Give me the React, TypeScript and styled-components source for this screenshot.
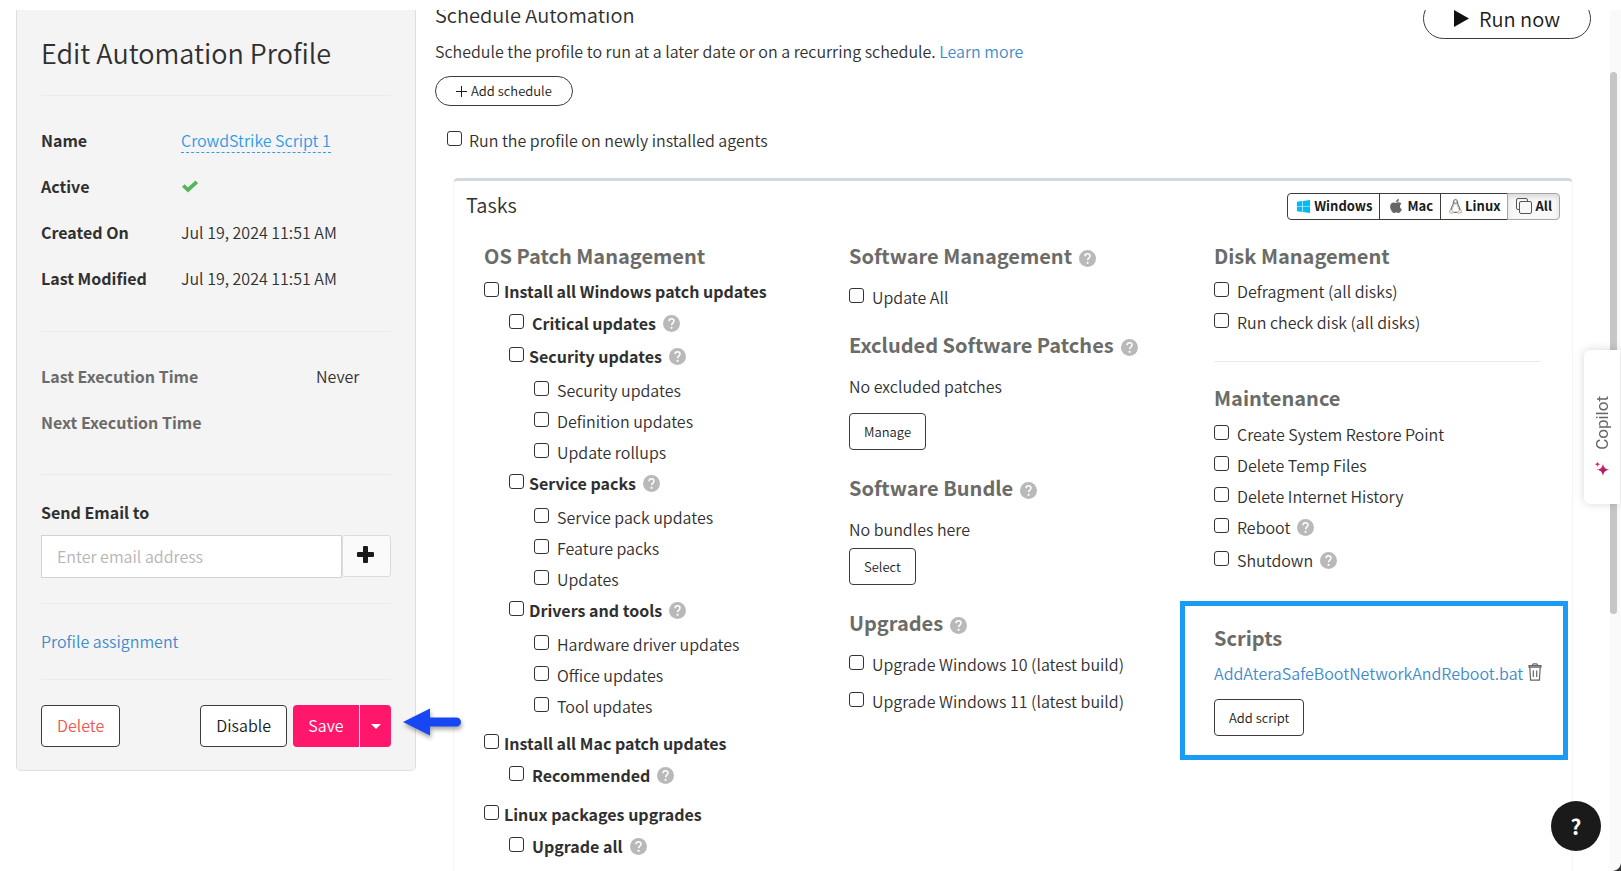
import React, { useId } from "react";
import styled, { createGlobalStyle, css } from "styled-components";
import { FaApple, FaWindows } from "react-icons/fa";

const GlobalStyle = createGlobalStyle`
  *, *::before, *::after { box-sizing: border-box; }
  body {
    margin: 0;
    background: #fff;
    color: #303030;
    font-family: "Noto Sans CJK SC", "Noto Sans", sans-serif;
    font-size: 16px;
    font-weight: 350;
    line-height: 20px;
  }
  button, input { font: inherit; color: inherit; }
  h1, h2, h3, p, ul, dl, dd { margin: 0; padding: 0; }
  ul { list-style: none; }
`;

const Screen = styled.div`
  position: relative;
  height: 100vh;
  padding-top: 10px;
  overflow: hidden;
`;

const Viewport = styled.div`
  display: flex;
  align-items: flex-start;
  height: 100%;
  padding: 0 30px 0 16px;
  overflow: hidden;
`;

/* ---------- Sidebar ---------- */

const Sidebar = styled.aside`
  position: relative;
  flex: 0 0 400px;
  padding: 26px 24px 23px;
  background: #f4f4f4;
  border: 1px solid #dfdfdf;
  border-top: 0;
  border-radius: 0 0 5px 5px;
`;

const PageTitle = styled.h1`
  font-size: 27px;
  font-weight: 350;
  line-height: 34px;
`;

const Divider = styled.hr<{ $top: number; $bottom: number }>`
  height: 1px;
  margin: ${(p) => p.$top}px 0 ${(p) => p.$bottom}px;
  border: 0;
  background: #ebebeb;
`;

const Facts = styled.dl<{ $wide?: boolean }>`
  display: grid;
  grid-template-columns: ${(p) => (p.$wide ? "275px" : "140px")} 1fr;
  row-gap: 26px;
  dt { font-weight: 600; color: ${(p) => (p.$wide ? "#6b6b6b" : "inherit")}; }
`;

const Link = styled.a`
  color: #428bca;
  text-decoration: none;
`;

const EditableLink = styled(Link)`
  color: #2f9bea;
  border-bottom: 1px dashed #2f9bea;
`;

const FieldLabel = styled.label`
  display: block;
  font-weight: 600;
`;

const EmailRow = styled.div`
  display: flex;
  align-items: flex-start;
  margin-top: 13px;
`;

const EmailInput = styled.input`
  flex: 1;
  min-width: 0;
  height: 43px;
  padding: 0 15px 2px;
  border: 1px solid #d0d2de;
  background: #fff;
  outline: none;
  &::placeholder { color: #b5b5b5; opacity: 1; }
`;

const AddEmail = styled.button`
  display: flex;
  align-items: center;
  justify-content: center;
  width: 49px;
  height: 42px;
  padding: 0 2px 4px 0;
  border: 1px solid #dcdcdc;
  border-radius: 3px;
  background: #fafafa;
  color: #1a1a1a;
`;

const Actions = styled.div`
  display: flex;
  gap: 6px;
`;

const buttonBase = css`
  display: inline-flex;
  align-items: center;
  justify-content: center;
  border: 1px solid #3c3c3c;
  background: #fff;
  color: #1a1a1a;
  white-space: nowrap;
`;

const ActionButton = styled.button<{ $danger?: boolean }>`
  ${buttonBase}
  height: 42px;
  padding: 0 15px 2px;
  border-radius: 4px;
  ${(p) => p.$danger && "margin-right: auto; color: #f55454;"}
`;

const SplitButton = styled.div`
  display: flex;
  gap: 1px;
`;

const PrimaryButton = styled.button<{ $toggle?: boolean }>`
  display: flex;
  align-items: center;
  justify-content: center;
  width: ${(p) => (p.$toggle ? 31 : 66)}px;
  height: 42px;
  padding: ${(p) => (p.$toggle ? "0" : "0 0 2px")};
  border: 0;
  border-radius: ${(p) => (p.$toggle ? "0 4px 4px 0" : "4px 0 0 4px")};
  background: #ff176c;
  color: #fff;
`;

const Pointer = styled.svg`
  position: absolute;
  right: -46px;
  bottom: 34px;
  z-index: 2;
  filter: drop-shadow(1px 3px 2px rgba(0, 0, 0, 0.35));
`;

/* ---------- Main column ---------- */

const Main = styled.main`
  flex: 1;
  min-width: 0;
  padding-left: 19px;
`;

const TopBar = styled.div`
  display: flex;
  align-items: flex-start;
  justify-content: space-between;
  height: 29px;
`;

const TopTitle = styled.h2`
  margin-top: -10px;
  font-size: 20px;
  font-weight: 350;
  line-height: 30px;
`;

const RunNow = styled.button`
  ${buttonBase}
  gap: 10px;
  height: 41px;
  margin-top: -12px;
  padding: 0 30px;
  border-radius: 21px;
  font-size: 20px;
`;

const Intro = styled.p`
  line-height: 24px;
`;

const AddSchedule = styled.button`
  ${buttonBase}
  gap: 4px;
  height: 30px;
  margin: 13px 0 24px;
  padding: 0 20px;
  border-radius: 15px;
  font-size: 13px;
`;

const Card = styled.section`
  min-height: 720px;
  margin: 28px 18px 0;
  border: 1px solid #f5f5f5;
  border-top: 3px solid #d2d8e2;
  border-radius: 5px 5px 0 0;
`;

const CardHeader = styled.header`
  display: flex;
  align-items: flex-start;
  justify-content: space-between;
  padding: 12px 12px 0;
`;

const CardTitle = styled.h2`
  font-size: 20px;
  font-weight: 350;
  line-height: 24px;
`;

const Segments = styled.div`
  display: flex;
`;

const Segment = styled.button<{ $active?: boolean }>`
  ${buttonBase}
  height: 27px;
  padding: 0 7px 1px 8px;
  gap: 3px;
  font-size: 13px;
  font-weight: 700;
  & + & { margin-left: -1px; }
  &:first-child { border-radius: 4px 0 0 4px; }
  &:last-child { border-radius: 0 4px 4px 0; }
  ${(p) =>
    p.$active &&
    `border-color: #a5a5a5; background: #f8f8f8; box-shadow: inset 0 3px 5px rgba(0, 0, 0, 0.12);`}
`;

const Columns = styled.div`
  display: grid;
  grid-template-columns: repeat(3, minmax(0, 1fr));
  padding: 22px 8px 0 15px;
`;

const Column = styled.div`
  padding: 0 15px;
  &:last-child { padding-right: 23px; }
`;

const Section = styled.section<{ $spaced?: boolean }>`
  & + & { margin-top: 24px; }
  ${(p) => p.$spaced && "ul { display: grid; row-gap: 6px; } ul > li:last-child > div { height: 20px; }"}
`;

const Heading = styled.h3<{ $gap?: number }>`
  display: flex;
  align-items: center;
  gap: 7px;
  margin-bottom: ${(p) => p.$gap ?? 11}px;
  color: #6b6b68;
  font-size: 20px;
  font-weight: 600;
  line-height: 28px;
  white-space: nowrap;
  svg { margin-top: 4px; }
`;

const Row = styled.div<{ $help?: boolean; $bold?: boolean }>`
  display: flex;
  align-items: flex-start;
  height: ${(p) => (p.$help ? 33 : 31)}px;
  font-weight: ${(p) => (p.$bold ? 600 : 350)};
  white-space: nowrap;
  svg { margin: 2px 0 0 7px; }
`;

const Box = styled.input`
  appearance: none;
  flex: none;
  width: 15px;
  height: 15px;
  margin: 1px 0 0;
  border: 1px solid #333;
  border-radius: 3px;
  background: #fff;
`;

const RowLabel = styled.label<{ $tight?: boolean }>`
  padding-left: ${(p) => (p.$tight ? 5 : 8)}px;
`;

const SubList = styled.ul`
  margin-top: 1px;
  padding-left: 25px;
`;

const TaskItem = styled.li`
  ${SubList} & { margin: 0; }
`;

const TopItem = styled(TaskItem)`
  & + & { margin-top: 6px; }
`;

const NewAgents = styled.div`
  display: flex;
  padding-left: 12px;
  label { padding-left: 7px; }
`;

const SmallButton = styled.button`
  ${buttonBase}
  height: 37px;
  padding: 0 14px;
  border-radius: 4px;
  font-size: 13px;
`;

const Note = styled.p<{ $gap: number }>`
  margin-bottom: ${(p) => p.$gap}px;
`;

const ScriptsBox = styled.section`
  margin: 18px -27px 0 -34px;
  padding: 18px 0 19px 29px;
  border: 5px solid #1a9cf5;
`;

const ScriptRow = styled.div`
  display: flex;
  align-items: flex-start;
  gap: 5px;
  margin-bottom: 16px;
`;

const IconButton = styled.button`
  display: flex;
  padding: 0;
  border: 0;
  background: none;
`;

/* ---------- Floating parts ---------- */

const ScrollTrack = styled.div`
  position: absolute;
  top: 10px;
  right: 0;
  bottom: 0;
  width: 11px;
  background: #fafafa;
`;

const ScrollThumb = styled.div`
  width: 7px;
  height: 63%;
  margin-top: 62px;
  border-radius: 4px;
  background: #c6c6c6;
`;

const CopilotTab = styled.button`
  position: absolute;
  top: 350px;
  right: 1px;
  display: flex;
  align-items: center;
  justify-content: center;
  width: 36px;
  height: 154px;
  padding: 18px 0 0;
  border: 0;
  border-radius: 6px 0 0 6px;
  background: #fff;
  box-shadow: 0 0 10px rgba(0, 0, 0, 0.16);
`;

const CopilotText = styled.span`
  display: flex;
  align-items: center;
  gap: 11px;
  writing-mode: vertical-rl;
  transform: rotate(180deg);
  color: #666;
  font: 17px/20px Roboto, sans-serif;
`;

const HelpFab = styled.button`
  position: absolute;
  right: 20px;
  bottom: 20px;
  width: 50px;
  height: 50px;
  padding: 0;
  border: 0;
  border-radius: 50%;
  background: #1a1a1a;
  color: #fff;
  font-size: 21px;
  font-weight: 700;
`;

const Corner = styled.svg`
  position: absolute;
  right: 0;
  bottom: 0;
`;

/* ---------- Icons ---------- */

const HelpIcon = () => (
  <svg width="17" height="17" viewBox="0 0 17 17" fill="none" aria-hidden="true">
    <circle cx="8.5" cy="8.5" r="8.5" fill="#b9b9b9" />
    <path d="M6 6.3C6 4.6 7.1 3.7 8.500 3.700s2.500.9 2.500 2.400c0 2-2.400 2-2.400 4.100" stroke="#fff" strokeWidth="1.5" />
    <circle cx="8.6" cy="12.8" r="1.1" fill="#fff" />
  </svg>
);

const CheckSvg = styled.svg`
  display: block;
`;

const CheckMark = () => (
  <CheckSvg width="18" height="20" viewBox="0 0 18 20" fill="none" role="img" aria-label="Yes">
    <path d="M2.300 9.500L7 14L15.800 5.800" stroke="#55b559" strokeWidth="3.800" />
  </CheckSvg>
);

const PlusIcon = () => (
  <svg width="17" height="17" viewBox="0 0 17 17" fill="#1a1a1a" aria-hidden="true">
    <rect x="6" width="5" height="17" rx="1" />
    <rect y="6" width="17" height="5" rx="1" />
  </svg>
);

const TrashIcon = () => (
  <svg width="14" height="18" viewBox="0 0 14 18" fill="none" stroke="#666" strokeWidth="1.2">
    <path d="M.5 4.200h13M4.400 2.600c0-1.200.4-1.800 1.200-1.800h2.800c.8 0 1.200.6 1.200 1.800M1 4.200v-1.500h12v1.500M1.800 4.500l.8 12.600h8.800l.8-12.600M5.300 7.500v6.500M8.700 7.500v6.500" />
  </svg>
);

const LinuxIcon = () => (
  <svg width="13" height="15" viewBox="0 0 13 15" fill="none" stroke="#555" strokeWidth="1">
    <path d="M6.500.700c-1.500 0-2.100 1.100-2.100 2.500 0 1.600-.2 2.300-1 3.600-.8 1.200-1.400 2.600-1.400 4.200M6.500.7c1.500 0 2.100 1.100 2.100 2.500 0 1.600.2 2.300 1 3.600.8 1.200 1.400 2.600 1.400 4.200M4.500 13.300h4" />
    <path d="M5.200 5.200c-.4 1.600-1.700 3.300-1.700 5M7.800 5.200c.4 1.600 1.700 3.300 1.700 5" stroke="#999" strokeWidth=".7" />
    <path d="M5.200 3.800l1.300.9 1.300-.9M5.700 2.700v.6M7.300 2.700v.6" />
    <path d="M2 10.600l2.300 2.600c.2.900-.7 1.200-1.400.9L.6 13.400l.3-2.300zM11 10.600l-2.300 2.600c-.2.900.7 1.200 1.400.9l2.300-.7-.3-2.300z" stroke="#a8937a" strokeWidth=".8" />
  </svg>
);

const LayersIcon = () => (
  <svg width="16" height="16" viewBox="0 0 16 16" fill="none" stroke="#555">
    <path d="M3.500 11.500h-1.500a1.500 1.500 0 0 1-1.500-1.500v-8A1.500 1.500 0 0 1 2 .5h8a1.500 1.500 0 0 1 1.500 1.500v1.500" />
    <rect x="3.500" y="3.500" width="12" height="12" rx="1.500" />
  </svg>
);

const Spark = styled.svg`
  transform: rotate(180deg);
`;

const SparkIcon = () => (
  <Spark width="16" height="16" viewBox="0 0 16 16" aria-hidden="true">
    <defs>
      <linearGradient id="spark" x1="0" y1="0" x2="1" y2="1">
        <stop offset=".2" stopColor="#ff176c" />
        <stop offset="1" stopColor="#3f2a5c" />
      </linearGradient>
    </defs>
    <path fill="url(#spark)" d="M9 2.500c.5 4 1.800 5.700 6.500 6.500-4.700.8-6 2.500-6.500 6.500-.5-4-1.800-5.700-6.500-6.500C7.200 8.200 8.500 6.500 9 2.500z" />
    <path fill="#ff176c" d="M3.500.3c.2 1.900.9 2.600 3 3-2.100.4-2.800 1.100-3 3-.2-1.900-.9-2.600-3-3 2.100-.4 2.800-1.100 3-3z" />
  </Spark>
);

/* ---------- Tasks ---------- */

type Task = { label: string; help?: boolean; bold?: boolean; children?: Task[] };

const patchTasks: Task[] = [
  {
    label: "Install all Windows patch updates",
    bold: true,
    children: [
      { label: "Critical updates", bold: true, help: true },
      {
        label: "Security updates", bold: true, help: true,
        children: [{ label: "Security updates" }, { label: "Definition updates" }, { label: "Update rollups" }],
      },
      {
        label: "Service packs", bold: true, help: true,
        children: [{ label: "Service pack updates" }, { label: "Feature packs" }, { label: "Updates" }],
      },
      {
        label: "Drivers and tools", bold: true, help: true,
        children: [{ label: "Hardware driver updates" }, { label: "Office updates" }, { label: "Tool updates" }],
      },
    ],
  },
  { label: "Install all Mac patch updates", bold: true, children: [{ label: "Recommended", bold: true, help: true }] },
  { label: "Linux packages upgrades", bold: true, children: [{ label: "Upgrade all", bold: true, help: true }] },
];

const diskTasks: Task[] = [{ label: "Defragment (all disks)" }, { label: "Run check disk (all disks)" }];

const maintenanceTasks: Task[] = [
  { label: "Create System Restore Point" },
  { label: "Delete Temp Files" },
  { label: "Delete Internet History" },
  { label: "Reboot", help: true },
  { label: "Shutdown", help: true },
];

const upgradeTasks: Task[] = [
  { label: "Upgrade Windows 10 (latest build)" },
  { label: "Upgrade Windows 11 (latest build)" },
];

function TaskNode({ task, top }: { task: Task; top?: boolean }) {
  const id = useId();
  const Item = top ? TopItem : TaskItem;
  return (
    <Item>
      <Row $help={task.help} $bold={task.bold}>
        <Box type="checkbox" id={id} />
        <RowLabel htmlFor={id} $tight={!!task.children}>{task.label}</RowLabel>
        {task.help && <HelpIcon />}
      </Row>
      {task.children && (
        <SubList>
          {task.children.map((child) => <TaskNode key={child.label} task={child} />)}
        </SubList>
      )}
    </Item>
  );
}

const TaskList = ({ tasks, top }: { tasks: Task[]; top?: boolean }) => (
  <ul>{tasks.map((task) => <TaskNode key={task.label} task={task} top={top} />)}</ul>
);

function ProfilePanel() {
  return (
    <Sidebar>
      <PageTitle>Edit Automation Profile</PageTitle>
      <Divider $top={25} $bottom={34} />
      <Facts>
        <dt>Name</dt>
        <dd><EditableLink href="#name">CrowdStrike Script 1</EditableLink></dd>
        <dt>Active</dt>
        <dd><CheckMark /></dd>
        <dt>Created On</dt>
        <dd>Jul 19, 2024 11:51 AM</dd>
        <dt>Last Modified</dt>
        <dd>Jul 19, 2024 11:51 AM</dd>
      </Facts>
      <Divider $top={43} $bottom={34} />
      <Facts $wide>
        <dt>Last Execution Time</dt>
        <dd>Never</dd>
        <dt>Next Execution Time</dt>
        <dd />
      </Facts>
      <Divider $top={42} $bottom={27} />
      <FieldLabel htmlFor="email">Send Email to</FieldLabel>
      <EmailRow>
        <EmailInput id="email" type="email" placeholder="Enter email address" />
        <AddEmail type="button" aria-label="Add email"><PlusIcon /></AddEmail>
      </EmailRow>
      <Divider $top={25} $bottom={27} />
      <Link href="#assignment">Profile assignment</Link>
      <Divider $top={28} $bottom={25} />
      <Actions>
        <ActionButton type="button" $danger>Delete</ActionButton>
        <ActionButton type="button">Disable</ActionButton>
        <SplitButton>
          <PrimaryButton type="button">Save</PrimaryButton>
          <PrimaryButton type="button" $toggle aria-label="More save options">
            <svg width="10" height="5" viewBox="0 0 10 5"><path d="M0 0h10L5 5z" fill="#fff" /></svg>
          </PrimaryButton>
        </SplitButton>
      </Actions>
      <Pointer width="58" height="28" viewBox="0 0 58 28" aria-hidden="true">
        <path d="M0 14L27 .5v9h26.500a4.500 4.500 0 0 1 0 9H27v9z" fill="#1746f5" />
      </Pointer>
    </Sidebar>
  );
}

export default function App() {
  return (
    <>
      <GlobalStyle />
      <Screen>
        <Viewport>
          <ProfilePanel />
          <Main>
            <TopBar>
              <TopTitle>Schedule Automation</TopTitle>
              <RunNow type="button">
                <svg width="15" height="17" viewBox="0 0 15 17"><path d="M0 0l15 8.500L0 17z" fill="#111" /></svg>
                Run now
              </RunNow>
            </TopBar>
            <Intro>
              Schedule the profile to run at a later date or on a recurring schedule. <Link href="#learn">Learn more</Link>
            </Intro>
            <AddSchedule type="button">
              <svg width="11" height="11" viewBox="0 0 11 11"><path d="M5.500 0v11M0 5.500h11" stroke="#1a1a1a" /></svg>
              Add schedule
            </AddSchedule>
            <NewAgents>
              <Box type="checkbox" id="new-agents" />
              <label htmlFor="new-agents">Run the profile on newly installed agents</label>
            </NewAgents>
            <Card>
              <CardHeader>
                <CardTitle>Tasks</CardTitle>
                <Segments>
                  <Segment type="button"><FaWindows size={15} color="#00bcf2" />Windows</Segment>
                  <Segment type="button"><FaApple size={16} color="#666" />Mac</Segment>
                  <Segment type="button"><LinuxIcon />Linux</Segment>
                  <Segment type="button" $active><LayersIcon />All</Segment>
                </Segments>
              </CardHeader>
              <Columns>
                <Column>
                  <Heading>OS Patch Management</Heading>
                  <TaskList tasks={patchTasks} top />
                </Column>
                <Column>
                  <Section $spaced>
                    <Heading $gap={17}>Software Management <HelpIcon /></Heading>
                    <TaskList tasks={[{ label: "Update All" }]} />
                  </Section>
                  <Section>
                    <Heading $gap={17}>Excluded Software Patches <HelpIcon /></Heading>
                    <Note $gap={17}>No excluded patches</Note>
                    <SmallButton type="button">Manage</SmallButton>
                  </Section>
                  <Section>
                    <Heading $gap={17}>Software Bundle <HelpIcon /></Heading>
                    <Note $gap={9}>No bundles here</Note>
                    <SmallButton type="button">Select</SmallButton>
                  </Section>
                  <Section $spaced>
                    <Heading $gap={17}>Upgrades <HelpIcon /></Heading>
                    <TaskList tasks={upgradeTasks} />
                  </Section>
                </Column>
                <Column>
                  <Heading>Disk Management</Heading>
                  <TaskList tasks={diskTasks} />
                  <Divider $top={18} $bottom={22} />
                  <Heading $gap={12}>Maintenance</Heading>
                  <TaskList tasks={maintenanceTasks} />
                  <ScriptsBox>
                    <Heading>Scripts</Heading>
                    <ScriptRow>
                      <Link href="#script">AddAteraSafeBootNetworkAndReboot.bat</Link>
                      <IconButton type="button" aria-label="Remove script"><TrashIcon /></IconButton>
                    </ScriptRow>
                    <SmallButton type="button">Add script</SmallButton>
                  </ScriptsBox>
                </Column>
              </Columns>
            </Card>
          </Main>
        </Viewport>
        <ScrollTrack><ScrollThumb /></ScrollTrack>
        <CopilotTab type="button">
          <CopilotText><SparkIcon />Copilot</CopilotText>
        </CopilotTab>
        <HelpFab type="button" aria-label="Help">?</HelpFab>
        <Corner width="8" height="8" viewBox="0 0 8 8" aria-hidden="true"><path d="M8 0v8H0C5 7 7 5 8 0z" fill="#333" /></Corner>
      </Screen>
    </>
  );
}
